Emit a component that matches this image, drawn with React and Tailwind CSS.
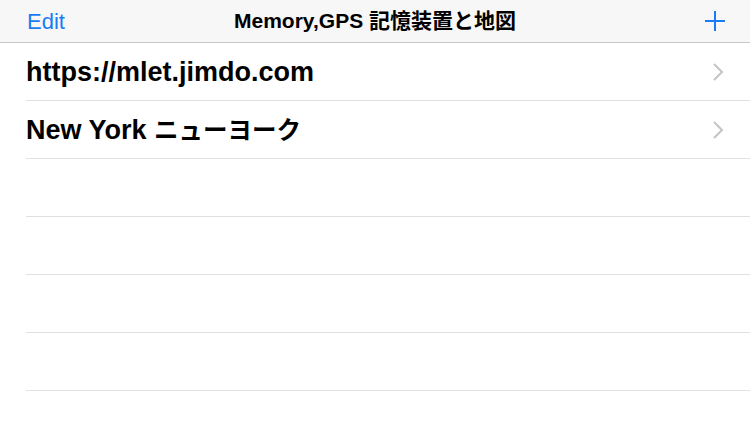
const FONT = "font-['Liberation_Sans','Noto_Sans_CJK_JP',sans-serif]";

// latin part and CJK part are sized apart so the widths line up with the original
const ROWS = [
  ["https://mlet.jimdo.com", ""],
  ["New York ", "ニューヨーク"],
  ["", ""],
  ["", ""],
  ["", ""],
  ["", ""],
  ["", ""],
];

function Chevron() {
  return (
    <svg width="12" height="18" viewBox="0 0 12 18" className="mr-[-1px]">
      <path d="M2 1l8 8-8 8" stroke="#c4c4c7" strokeWidth="2" fill="none" />
    </svg>
  );
}

function Row({ latin, cjk }) {
  return (
    <div className="ml-[26px] flex h-[58px] items-center justify-between border-b border-[#e0e0e3] pr-[27px]">
      <span className="pt-[2px] text-[27px] font-bold leading-none text-black">
        {latin}
        {cjk && <span className="text-[24.5px]">{cjk}</span>}
      </span>
      {latin && <Chevron />}
    </div>
  );
}

export default function App() {
  return (
    <div className={`h-[422px] w-[750px] overflow-hidden bg-white ${FONT}`}>
      <header className="relative flex h-[43px] items-center border-b border-[#c8c7cc] bg-[#f7f7f7] px-[27px]">
        <span className="text-[22px] text-[#1a7cf4]">Edit</span>
        <span className="absolute left-1/2 -translate-x-1/2 whitespace-nowrap text-[21px] font-semibold text-black">
          Memory,GPS 記憶装置と地図
        </span>
        <svg className="ml-auto mr-[-3px]" width="22" height="22" viewBox="0 0 22 22">
          <path d="M11 1v20M1 11h20" stroke="#1a7cf4" strokeWidth="2" fill="none" />
        </svg>
      </header>
      {ROWS.map(([latin, cjk], i) => (
        <Row key={i} latin={latin} cjk={cjk} />
      ))}
    </div>
  );
}
